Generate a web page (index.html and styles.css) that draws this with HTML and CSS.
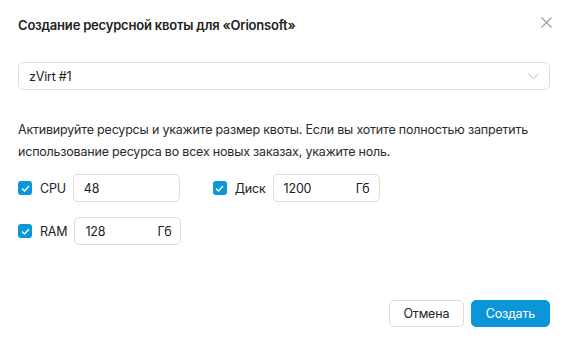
FILE: index.html
```html
<!DOCTYPE html>
<html lang="ru">
<head>
  <meta charset="UTF-8" />
  <title>Создание ресурсной квоты</title>
  <link rel="stylesheet" href="styles.css">
</head>
<body>
  <div class="dialog">
    <div class="dialog-header">
      <h2>Создание ресурсной квоты для «Orionsoft»</h2>
      <button class="close" aria-label="Закрыть">
        <svg width="11" height="11" viewBox="0 0 11 11"><path d="M0.5 0.5 L10.5 10.5 M10.5 0.5 L0.5 10.5" stroke="#9a9a9a" stroke-width="1.1" fill="none"/></svg>
      </button>
    </div>

    <div class="select">
      <span>zVirt #1</span>
      <svg width="11" height="7" viewBox="0 0 11 7"><path d="M0.5 0.5 L5.5 6 L10.5 0.5" stroke="#b8b8b8" stroke-width="1" fill="none"/></svg>
    </div>

    <p class="hint">Активируйте ресурсы и укажите размер квоты. Если вы хотите полностью запретить использование ресурса во всех новых заказах, укажите ноль.</p>

    <div class="resources">
      <div class="row">
        <label class="res res-cpu">
          <span class="check"><svg width="9" height="7" viewBox="0 0 9 7"><path d="M1 3.5 L3.5 6 L8 1" stroke="#fff" stroke-width="1.3" fill="none"/></svg></span>
          <span class="name">CPU</span>
          <span class="field"><span>48</span></span>
        </label>
        <label class="res res-disk">
          <span class="check"><svg width="9" height="7" viewBox="0 0 9 7"><path d="M1 3.5 L3.5 6 L8 1" stroke="#fff" stroke-width="1.3" fill="none"/></svg></span>
          <span class="name">Диск</span>
          <span class="field"><span>1200</span><span class="unit">Гб</span></span>
        </label>
      </div>
      <div class="row">
        <label class="res">
          <span class="check"><svg width="9" height="7" viewBox="0 0 9 7"><path d="M1 3.5 L3.5 6 L8 1" stroke="#fff" stroke-width="1.3" fill="none"/></svg></span>
          <span class="name">RAM</span>
          <span class="field"><span>128</span><span class="unit">Гб</span></span>
        </label>
      </div>
    </div>

    <div class="actions">
      <button class="btn btn-cancel">Отмена</button>
      <button class="btn btn-primary">Создать</button>
    </div>
  </div>
</body>
</html>
```

FILE: styles.css
```css
body {
  margin: 0;
  background: #fff;
  font-family: Inter, "Noto Sans", sans-serif;
  color: #222;
  letter-spacing: -0.2px;
}
.dialog {
  padding: 14px 15px 18px 18px;
  width: 532px;
}
.dialog-header {
  display: flex;
  justify-content: space-between;
  align-items: flex-start;
}
h2 {
  margin: 0;
  font-size: 13px;
  font-weight: 600;
  line-height: 22px;
  color: #222;
}
.close {
  border: none;
  background: none;
  padding: 0;
  margin: 3px -2px 0 0;
  height: 11px;
  cursor: pointer;
  display: flex;
}
.select {
  margin-top: 26px;
  height: 26px;
  border: 1px solid #dcdcdc;
  border-radius: 5px;
  display: flex;
  align-items: center;
  justify-content: space-between;
  padding: 0 10px 0 10px;
  font-size: 12.5px;
}
.hint {
  margin: 29px 0 0;
  font-size: 12.5px;
  line-height: 22px;
  color: #2a2a2a;
}
.resources {
  margin-top: 11px;
  display: flex;
  flex-direction: column;
  gap: 15px;
}
.row {
  display: flex;
  gap: 33px;
}
.res {
  display: flex;
  align-items: center;
  font-size: 12.5px;
}
.check {
  width: 14px;
  height: 14px;
  border-radius: 3px;
  background: #0a96d8;
  display: flex;
  align-items: center;
  justify-content: center;
  margin-right: 8px;
}
.name {
  margin-right: 7px;
}
.field {
  width: 86px;
  height: 26px;
  border: 1px solid #dcdcdc;
  border-radius: 5px;
  padding: 0 9px 0 10px;
  display: flex;
  align-items: center;
  justify-content: space-between;
}
.actions {
  margin-top: 55px;
  display: flex;
  justify-content: flex-end;
  gap: 7px;
}
.btn {
  height: 27px;
  border-radius: 5px;
  font-family: Inter, "Noto Sans", sans-serif;
  font-size: 12.5px;
  letter-spacing: -0.2px;
  padding: 0 13.5px;
  cursor: pointer;
}
.btn-cancel {
  background: #fff;
  border: 1px solid #dcdcdc;
  color: #222;
}
.btn-primary {
  background: #0a96d8;
  border: 1px solid #0a96d8;
  color: #fff;
  padding: 0 14px;
}
```
